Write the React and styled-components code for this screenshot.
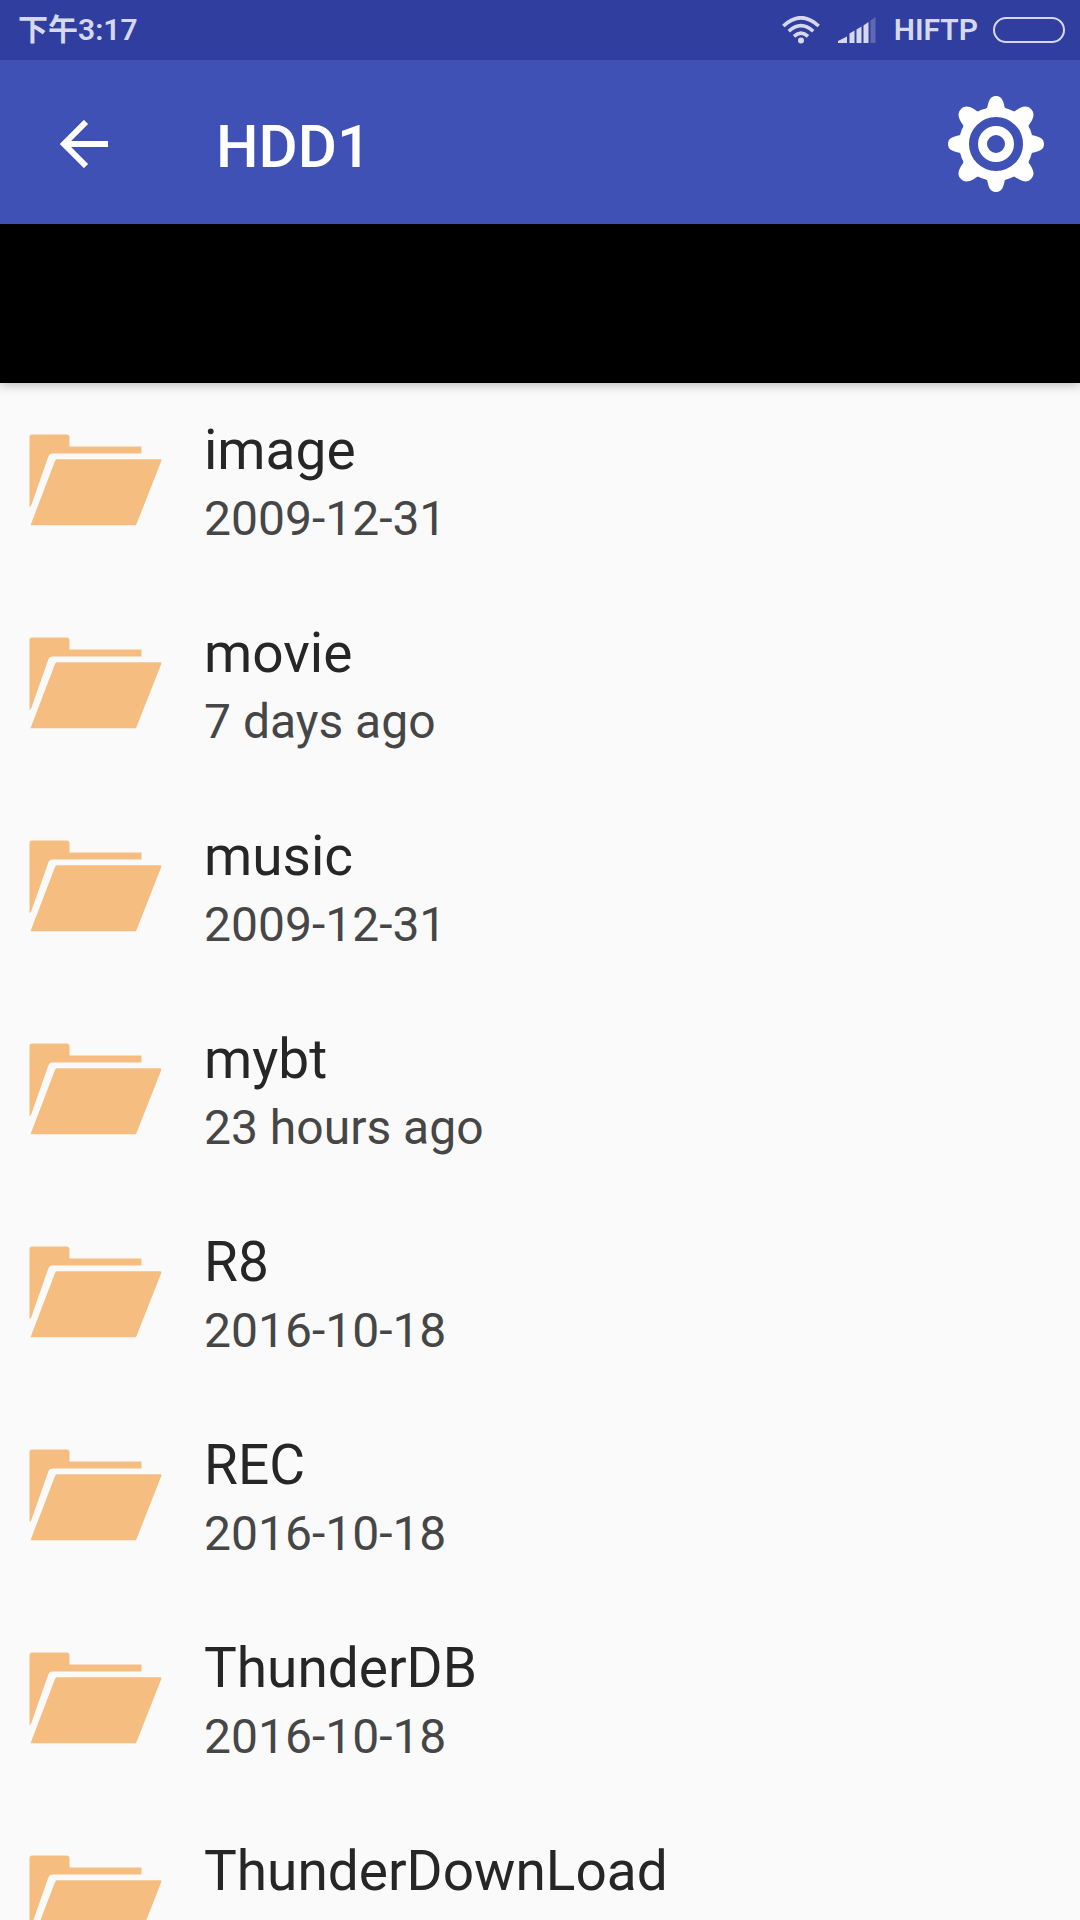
import React from "react";
import styled, { createGlobalStyle } from "styled-components";

const GlobalStyle = createGlobalStyle`
  *, *::before, *::after { box-sizing: border-box; }
  body {
    margin: 0;
    background: #fafafa;
    font-family: Roboto, "Noto Sans CJK SC", sans-serif;
  }
`;

const Screen = styled.div`
  display: flex;
  flex-direction: column;
  height: 100vh;
  background: #fafafa;
`;

const StatusBar = styled.div`
  display: flex;
  align-items: center;
  justify-content: space-between;
  height: 60px;
  padding: 0 15px 0 18px;
  background: #303f9f;
  color: #d6d9ec;
  font-size: 30px;
  line-height: 36px;
`;

const Clock = styled.time`
  font-weight: 600;
`;

const Indicators = styled.div`
  display: flex;
  align-items: center;
  svg { display: block; }
`;

const Signal = styled.svg`
  margin-left: 18px;
`;

const Carrier = styled.span`
  margin: 0 15px 0 18px;
  font-weight: 600;
`;

const AppBar = styled.header`
  position: relative;
  z-index: 1;
  display: flex;
  align-items: center;
  height: 164px;
  flex-shrink: 0;
  padding: 4px 36px 0 48px;
  background: #3f51b5;
  color: #fff;
`;

const IconButton = styled.button`
  display: flex;
  align-items: center;
  justify-content: center;
  width: ${(p) => p.$size}px;
  height: ${(p) => p.$size}px;
  padding: 0;
  border: 0;
  background: none;
  color: inherit;
  cursor: pointer;
`;

const Title = styled.h1`
  flex: 1;
  margin: 0;
  padding: 6px 0 0 96px;
  font-size: 60px;
  line-height: 70px;
  font-weight: 500;
`;

const Banner = styled.div`
  position: relative;
  height: 159px;
  flex-shrink: 0;
  background: #000;
  box-shadow: 0 2px 10px rgba(0, 0, 0, 0.26);
`;

const FileList = styled.ul`
  flex: 1;
  min-height: 0;
  margin: 0;
  padding: 0;
  list-style: none;
  overflow-y: auto;
  scrollbar-width: none;
`;

const Row = styled.a`
  display: flex;
  gap: 42px;
  min-height: 203px;
  padding: 36px 29px 0;
  color: #262626;
  text-decoration: none;
`;

const FolderSvg = styled.svg`
  display: block;
  flex-shrink: 0;
  margin-top: 15px;
`;

const Details = styled.div`
  display: flex;
  flex-direction: column;
  gap: 9px;
`;

const Name = styled.span`
  font-size: 55px;
  line-height: 63px;
`;

const Modified = styled.span`
  color: #464646;
  font-size: 48px;
  line-height: 56px;
`;

const files = [
  { name: "image", modified: "2009-12-31" },
  { name: "movie", modified: "7 days ago" },
  { name: "music", modified: "2009-12-31" },
  { name: "mybt", modified: "23 hours ago" },
  { name: "R8", modified: "2016-10-18" },
  { name: "REC", modified: "2016-10-18" },
  { name: "ThunderDB", modified: "2016-10-18" },
  { name: "ThunderDownLoad" },
];

function FolderIcon() {
  return (
    <FolderSvg width="133" height="92" viewBox="0 0 133 92" fill="#f5be80" aria-hidden="true">
      <path d="M0.5 73V3Q0.5 0.5 3 0.5H37.5Q40.5 0.5 40.5 3V12.5H112.5V19.5H23Q20.5 19.5 19.5 22L2 72Z" />
      <path d="M28 25.3H131.5Q132.8 25.5 132.3 27L107 91.3H1.5L26 27Q26.6 25.3 28 25.3Z" />
    </FolderSvg>
  );
}

function BackIcon() {
  return (
    <svg width="48" height="48" viewBox="0 0 48 48" fill="none" stroke="currentColor" strokeWidth="6" aria-hidden="true">
      <path d="M48 24H6M26 2L4 24L26 46" />
    </svg>
  );
}

function GearIcon() {
  return (
    <svg width="96" height="96" viewBox="-48 -48 96 96" fill="currentColor" aria-hidden="true">
      <circle r="32" fill="none" stroke="currentColor" strokeWidth="10" />
      <circle r="13.5" fill="none" stroke="currentColor" strokeWidth="9" />
      {[0, 90, 180, 270].map((a) => (
        <path key={a} transform={`rotate(${a})`} d="M-12 -34L-9 -35.7C-7.5 -41 -7 -48 0 -48C7 -48 7.5 -41 9 -35.7L12 -34Z" />
      ))}
      {[45, 135, 225, 315].map((a) => (
        <path key={a} transform={`rotate(${a})`} d="M-13 -34L-10 -36C-9 -41 -8 -49.500 0 -49.500C8 -49.500 9 -41 10 -36L13 -34Z" />
      ))}
    </svg>
  );
}

function WifiIcon() {
  return (
    <svg width="38" height="28" viewBox="0 0 38 28" fill="none" stroke="currentColor" strokeWidth="3.600" aria-hidden="true">
      <path d="M1.300 10Q19 -6.500 36.700 10" />
      <path d="M6.800 15.300Q19 4 31.200 15.300" />
      <path d="M12 20.300Q19 14 26 20.300" />
      <circle cx="19" cy="24.500" r="3" fill="currentColor" stroke="none" />
    </svg>
  );
}

function SignalIcon() {
  return (
    <Signal width="38" height="26" viewBox="0 0 38 26" fill="currentColor" aria-hidden="true">
      <path d="M0 26V24L9 19.500V26Z" />
      <path d="M11.500 26V16.500L16.500 13.500V26Z" />
      <path d="M18.500 26V12.500L23.500 9.500V26Z" />
      <path d="M25.500 26V8.500L30.500 5V26Z" />
      <path opacity="0.28" d="M32.500 26V3.500L37.500 0V26Z" />
    </Signal>
  );
}

function BatteryIcon() {
  return (
    <svg width="72" height="28" viewBox="0 0 72 28" fill="none" aria-hidden="true">
      <path d="M68.500 9Q69.800 14 68.500 18Z" fill="#b3163f" />
      <rect x="1" y="2" width="70" height="24" rx="12" stroke="currentColor" strokeWidth="2" />
    </svg>
  );
}

export default function App() {
  return (
    <Screen>
      <GlobalStyle />
      <StatusBar>
        <Clock>下午3:17</Clock>
        <Indicators>
          <WifiIcon />
          <SignalIcon />
          <Carrier>HIFTP</Carrier>
          <BatteryIcon />
        </Indicators>
      </StatusBar>
      <AppBar>
        <IconButton type="button" $size={72} aria-label="Back">
          <BackIcon />
        </IconButton>
        <Title>HDD1</Title>
        <IconButton type="button" $size={96} aria-label="Settings">
          <GearIcon />
        </IconButton>
      </AppBar>
      <Banner />
      <FileList>
        {files.map((file) => (
          <li key={file.name}>
            <Row href={`#${file.name}`}>
              <FolderIcon />
              <Details>
                <Name>{file.name}</Name>
                {file.modified && <Modified>{file.modified}</Modified>}
              </Details>
            </Row>
          </li>
        ))}
      </FileList>
    </Screen>
  );
}
